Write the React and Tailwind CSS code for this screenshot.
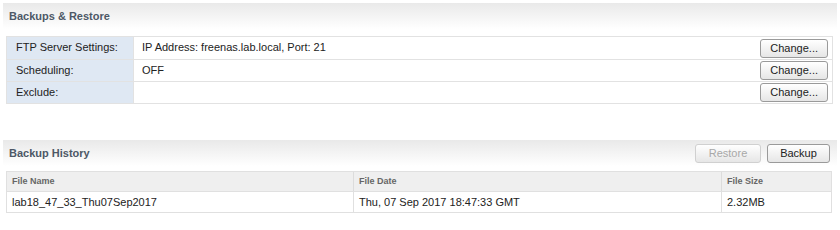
import React from "react";

const font = { fontFamily: '"Liberation Sans", Arial, sans-serif' };

function Btn({ children, disabled }) {
  return (
    <button
      disabled={disabled}
      className={
        "h-[19px] rounded-[3px] border text-[11px] leading-none bg-gradient-to-b from-white to-[#e6e6e6] " +
        (disabled ? "border-[#d0d0d0] text-[#a8a8a8]" : "border-[#9a9a9a] text-[#222]")
      }
    >
      {children}
    </button>
  );
}

function SectionHeader({ title, children }) {
  return (
    <div className="flex h-[26px] items-center justify-between bg-gradient-to-b from-[#e9e9e9] to-white pl-[6px] pr-[7px]">
      <span className="text-[11px] font-bold text-[#4d5866]">{title}</span>
      <div className="flex gap-[6px]">{children}</div>
    </div>
  );
}

export default function App() {
  const settings = [
    ["FTP Server Settings:", "IP Address: freenas.lab.local, Port: 21"],
    ["Scheduling:", "OFF"],
    ["Exclude:", ""],
  ];

  return (
    <div className="h-[230px] w-[840px] bg-white pl-[3px] pr-[3px] pt-[3px]" style={font}>
      <SectionHeader title="Backups & Restore" />

      <div className="ml-[3px] mr-[4px] mt-[7px] border border-[#e2e2e2]">
        {settings.map(([label, value], i) => (
          <div
            key={label}
            className={"flex h-[22px] " + (i > 0 ? "border-t border-[#e2e2e2]" : "")}
          >
            <div className="flex w-[127px] items-center border-r border-[#e2e2e2] bg-[#dfe8f3] pb-[1px] pl-[9px] text-[11px] text-[#222]">
              {label}
            </div>
            <div className="flex flex-1 items-center justify-between pl-[8px] pr-[4px] text-[11px] text-[#222]">
              <span className="pb-[1px]">{value}</span>
              <Btn>
                <span className="px-[9px]">Change...</span>
              </Btn>
            </div>
          </div>
        ))}
      </div>

      <div className="mt-[36px]">
        <SectionHeader title="Backup History">
          <Btn disabled>
            <span className="inline-block w-[64px]">Restore</span>
          </Btn>
          <Btn>
            <span className="inline-block w-[61px]">Backup</span>
          </Btn>
        </SectionHeader>
      </div>

      <div className="ml-[3px] mr-[5px] mt-[5px] border border-[#e0e0e0]">
        <div className="flex h-[19px] bg-[#efefef] text-[9px] font-bold text-[#666]">
          <div className="flex w-[347px] items-center border-r border-[#dcdcdc] pl-[5px]">File Name</div>
          <div className="flex w-[368px] items-center border-r border-[#dcdcdc] pl-[5px]">File Date</div>
          <div className="flex flex-1 items-center pl-[5px]">File Size</div>
        </div>
        <div className="flex h-[21px] border-t border-[#e0e0e0] text-[11px] text-[#222]">
          <div className="flex w-[347px] items-center border-r border-[#e0e0e0] pl-[5px]">lab18_47_33_Thu07Sep2017</div>
          <div className="flex w-[368px] items-center border-r border-[#e0e0e0] pl-[5px]">Thu, 07 Sep 2017 18:47:33 GMT</div>
          <div className="flex flex-1 items-center pl-[5px]">2.32MB</div>
        </div>
      </div>
    </div>
  );
}
